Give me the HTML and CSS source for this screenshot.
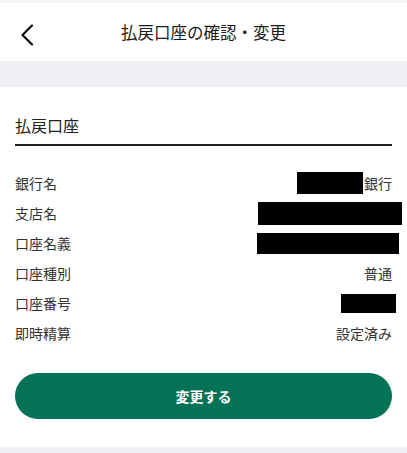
FILE: index.html
```html
<!DOCTYPE html>
<html lang="ja">
<head>
  <meta charset="UTF-8" />
  <meta name="viewport" content="width=device-width, initial-scale=1.0"/>
  <title>払戻口座の確認・変更</title>
  <link rel="stylesheet" href="styles.css">
</head>
<body>
  <header class="header">
    <button class="back" type="button" aria-label="戻る">
      <svg width="14" height="22" viewBox="0 0 14 22">
        <path d="M12 1.5 L2.5 11 L12 20.5" fill="none" stroke="#111" stroke-width="2.2" stroke-linecap="round" stroke-linejoin="round"/>
      </svg>
    </button>
    <h1 class="title">払戻口座の確認・変更</h1>
  </header>

  <div class="spacer"></div>

  <main class="section">
    <h2 class="section-title">払戻口座</h2>

    <dl class="info">
      <div class="row">
        <dt>銀行名</dt>
        <dd><span class="mask mask-bank"></span>銀行</dd>
      </div>
      <div class="row">
        <dt>支店名</dt>
        <dd><span class="mask mask-branch"></span></dd>
      </div>
      <div class="row">
        <dt>口座名義</dt>
        <dd><span class="mask mask-holder"></span></dd>
      </div>
      <div class="row">
        <dt>口座種別</dt>
        <dd>普通</dd>
      </div>
      <div class="row">
        <dt>口座番号</dt>
        <dd><span class="mask mask-number"></span></dd>
      </div>
      <div class="row">
        <dt>即時精算</dt>
        <dd>設定済み</dd>
      </div>
    </dl>

    <button class="btn-change" type="button">変更する</button>
  </main>

  <div class="footer-band"></div>
</body>
</html>
```

FILE: styles.css
```css
:root {
  --color-primario: #047257;
  --color-fondo: #efeff4;
  --color-texto: #222;
}

body {
  font-family: "Noto Sans CJK JP", "Noto Sans", sans-serif;
  margin: 0;
  padding: 0;
  background-color: #fff;
  color: var(--color-texto);
}

.header {
  position: relative;
  height: 58px;
  border-top: 3px solid #f4f4f6;
  display: flex;
  align-items: center;
  justify-content: center;
}

.back {
  position: absolute;
  left: 20px;
  top: 21px;
  padding: 0;
  border: none;
  background: none;
  line-height: 0;
}

.title {
  margin: 0;
  font-size: 16.5px;
  font-weight: 400;
  color: #1a1a1a;
}

.spacer {
  height: 26px;
  background-color: var(--color-fondo);
}

.section {
  padding: 26px 15px 28px;
}

.section-title {
  margin: 0;
  font-size: 16px;
  font-weight: 400;
  line-height: 24px;
  padding-bottom: 7px;
  border-bottom: 2px solid #222;
}

.info {
  margin: 22px 0 0;
}

.row {
  display: flex;
  justify-content: space-between;
  align-items: center;
  height: 30px;
  font-size: 14px;
  color: #333;
}

.row dt,
.row dd {
  margin: 0;
}

.row dd {
  display: flex;
  align-items: center;
}

.mask {
  display: inline-block;
  background-color: #000;
}

.mask-bank {
  width: 66px;
  height: 22px;
  margin-right: 1px;
}

.mask-branch {
  width: 144px;
  height: 23px;
  margin-right: -10px;
}

.mask-holder {
  width: 142px;
  height: 21px;
  margin-right: -7px;
}

.mask-number {
  width: 55px;
  height: 19px;
  margin-right: -4px;
}

.btn-change {
  display: block;
  width: 100%;
  height: 46px;
  margin-top: 25px;
  border: none;
  border-radius: 23px;
  background-color: var(--color-primario);
  color: #fff;
  font-family: inherit;
  font-size: 14px;
  font-weight: 700;
  cursor: pointer;
}

.footer-band {
  height: 7px;
  background-color: var(--color-fondo);
}
```
